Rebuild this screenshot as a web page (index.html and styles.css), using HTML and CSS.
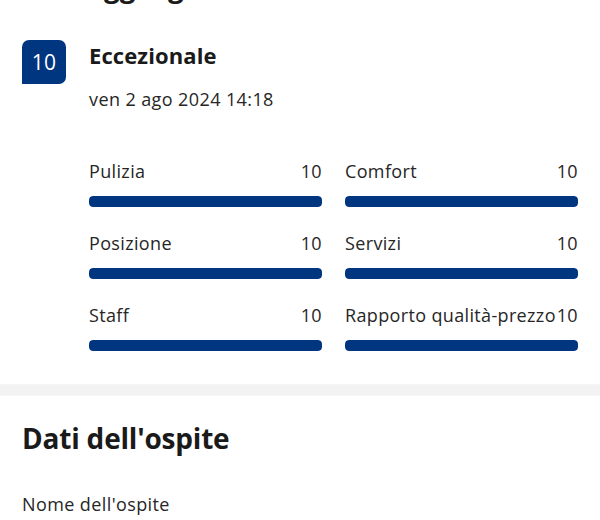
FILE: index.html
```html
<!DOCTYPE html>
<html lang="it">
<head>
<meta charset="utf-8">
<title>Punteggio</title>
<link rel="stylesheet" href="styles.css">
</head>
<body>
<section class="review">
  <h2 class="section-title">Punteggio globale</h2>
  <div class="score-row">
    <div class="badge">10</div>
    <div class="score-body">
      <div class="score-word">Eccezionale</div>
      <div class="score-date">ven 2 ago 2024 14:18</div>
      <div class="subscores">
        <div class="sub">
          <div class="sub-head"><span>Pulizia</span><span>10</span></div>
          <div class="bar"><div class="fill" style="width:100%"></div></div>
        </div>
        <div class="sub">
          <div class="sub-head"><span>Comfort</span><span>10</span></div>
          <div class="bar"><div class="fill" style="width:100%"></div></div>
        </div>
        <div class="sub">
          <div class="sub-head"><span>Posizione</span><span>10</span></div>
          <div class="bar"><div class="fill" style="width:100%"></div></div>
        </div>
        <div class="sub">
          <div class="sub-head"><span>Servizi</span><span>10</span></div>
          <div class="bar"><div class="fill" style="width:100%"></div></div>
        </div>
        <div class="sub">
          <div class="sub-head"><span>Staff</span><span>10</span></div>
          <div class="bar"><div class="fill" style="width:100%"></div></div>
        </div>
        <div class="sub">
          <div class="sub-head"><span>Rapporto qualità-prezzo</span><span>10</span></div>
          <div class="bar"><div class="fill" style="width:100%"></div></div>
        </div>
      </div>
    </div>
  </div>
</section>
<div class="divider"></div>
<section class="guest">
  <h2 class="section-title">Dati dell'ospite</h2>
  <div class="field-label">Nome dell'ospite</div>
</section>
</body>
</html>
```
FILE: styles.css
```css
html, body {
  margin: 0;
  padding: 0;
  background: #ffffff;
}
body {
  font-family: "Open Sans", "DejaVu Sans", sans-serif;
  color: #1a1a1a;
  width: 600px;
  overflow: hidden;
}
.review {
  margin-top: -32px;
  padding: 0 22px 33px 22px;
}
.section-title {
  margin: 0;
  font-size: 28px;
  line-height: 36px;
  font-weight: 700;
  letter-spacing: -0.2px;
  color: #1a1a1a;
}
.score-row {
  display: flex;
  align-items: flex-start;
  gap: 23px;
  margin-top: 36px;
}
.badge {
  flex: 0 0 auto;
  width: 44px;
  height: 44px;
  background: #003580;
  color: #ffffff;
  border-radius: 7px 7px 7px 0;
  display: flex;
  align-items: center;
  justify-content: center;
  font-size: 21px;
  line-height: 1;
  letter-spacing: 0.3px;
}
.score-body {
  flex: 1;
  min-width: 0;
  padding-top: 1px;
}
.score-word {
  font-size: 22px;
  line-height: 28px;
  font-weight: 700;
  letter-spacing: 0.1px;
}
.score-date {
  margin-top: 18px;
  font-size: 18px;
  line-height: 24px;
  letter-spacing: 0.4px;
  color: #262626;
}
.subscores {
  margin-top: 48px;
  display: grid;
  grid-template-columns: 233px 233px;
  column-gap: 23px;
  row-gap: 24px;
}
.sub-head {
  display: flex;
  justify-content: space-between;
  white-space: nowrap;
  font-size: 18px;
  line-height: 24px;
  letter-spacing: 0.35px;
  color: #262626;
}
.bar {
  margin-top: 13px;
  height: 11px;
  border-radius: 4px;
  background: #e6e6e6;
  overflow: hidden;
}
.fill {
  height: 100%;
  background: #003580;
  border-radius: 4px;
}
.divider {
  height: 12px;
  background: #f2f2f2;
  border-top: 1px solid #f5f5f5;
  border-bottom: 1px solid #f7f7f7;
  box-sizing: border-box;
}
.guest {
  padding: 24px 22px 0 22px;
}
.field-label {
  margin-top: 36px;
  font-size: 18px;
  line-height: 24px;
  letter-spacing: 0.4px;
  color: #262626;
}
```
